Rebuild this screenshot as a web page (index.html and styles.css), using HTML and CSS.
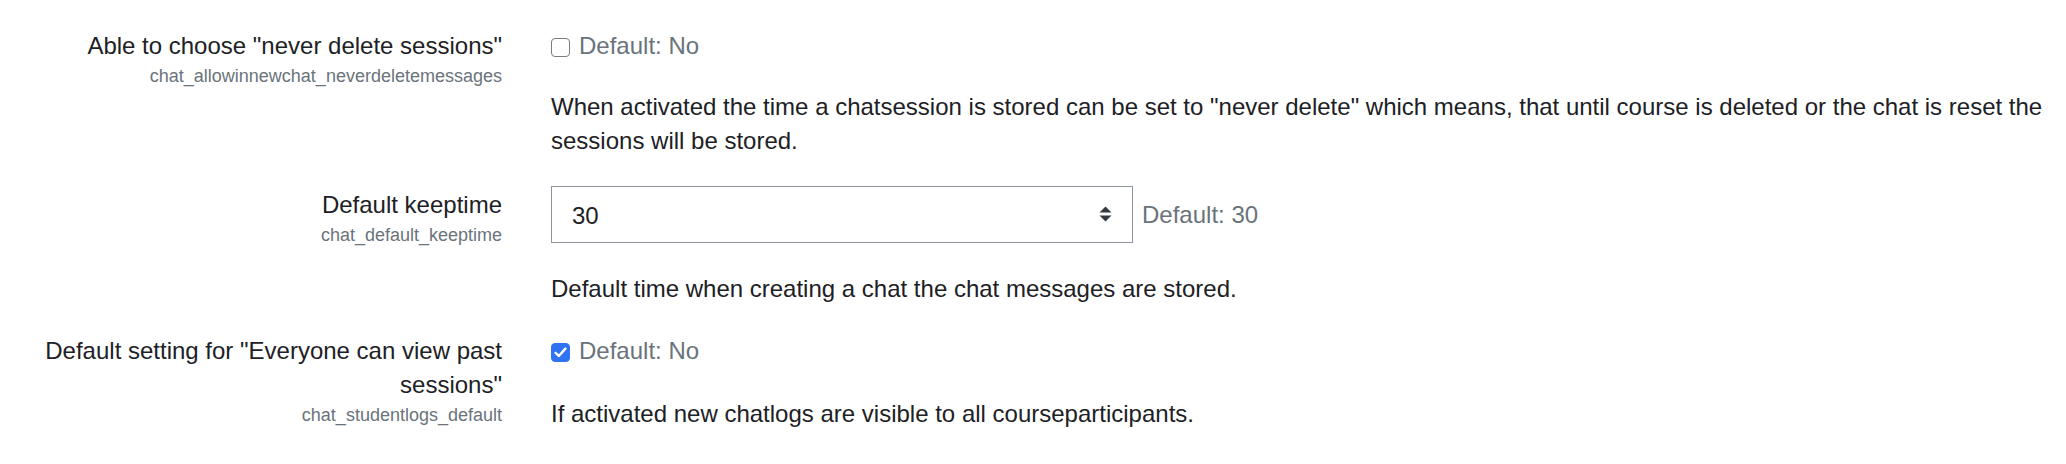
FILE: index.html
```html
<!DOCTYPE html>
<html lang="en">
<head>
<meta charset="utf-8">
<title>Chat settings</title>
<link rel="stylesheet" href="styles.css">
</head>
<body>
<div class="settings">
  <div class="form-item">
    <div class="form-label">
      <label class="label-text">Able to choose "never delete sessions"</label>
      <span class="shortname">chat_allowinnewchat_neverdeletemessages</span>
    </div>
    <div class="form-setting">
      <div class="check-line">
        <span class="checkbox"></span>
        <span class="default-info">Default: No</span>
      </div>
      <div class="description description-first">When activated the time a chatsession is stored can be set to "never delete" which means, that until course is deleted or the chat is reset the sessions will be stored.</div>
    </div>
  </div>

  <div class="form-item">
    <div class="form-label form-label-select">
      <label class="label-text">Default keeptime</label>
      <span class="shortname">chat_default_keeptime</span>
    </div>
    <div class="form-setting">
      <div class="select-line">
        <div class="custom-select">
          <span class="select-value">30</span>
          <svg class="select-arrow" width="13" height="16" viewBox="0 0 13 16" aria-hidden="true">
            <path d="M6.5 0.5 L12.5 6.5 L0.5 6.5 Z" fill="#343a40"/>
            <path d="M0.5 9.5 L12.5 9.5 L6.5 15.5 Z" fill="#343a40"/>
          </svg>
        </div>
        <span class="default-info">Default: 30</span>
      </div>
      <div class="description">Default time when creating a chat the chat messages are stored.</div>
    </div>
  </div>

  <div class="form-item">
    <div class="form-label">
      <label class="label-text">Default setting for "Everyone can view past sessions"</label>
      <span class="shortname">chat_studentlogs_default</span>
    </div>
    <div class="form-setting">
      <div class="check-line">
        <span class="checkbox checked">
          <svg width="13" height="11" viewBox="0 0 13 11" aria-hidden="true">
            <path d="M1.6 5.8 L4.9 9 L11.4 1.6" fill="none" stroke="#ffffff" stroke-width="2.4" stroke-linecap="round" stroke-linejoin="round"/>
          </svg>
        </span>
        <span class="default-info">Default: No</span>
      </div>
      <div class="description">If activated new chatlogs are visible to all courseparticipants.</div>
    </div>
  </div>
</div>
</body>
</html>
```

FILE: styles.css
```css
html, body {
  margin: 0;
  padding: 0;
  background: #ffffff;
}

body {
  font-family: "Liberation Sans", Arial, Helvetica, sans-serif;
  font-size: 24px;
  line-height: 34px;
  color: #1d2125;
}

.settings {
  padding: 29px 22px 0 0;
}

.form-item {
  display: grid;
  grid-template-columns: 502px 1fr;
  column-gap: 49px;
  margin-bottom: 28px;
}

.form-label {
  display: flex;
  flex-direction: column;
  align-items: flex-end;
  text-align: right;
  padding-left: 22px;
}

.form-label-select {
  padding-top: 2px;
}

.label-text {
  display: block;
}

.shortname {
  display: block;
  font-size: 18px;
  line-height: 27px;
  color: #6a737b;
}

.form-setting {
  display: flex;
  flex-direction: column;
  min-width: 0;
}

.check-line {
  display: flex;
  align-items: center;
  height: 34px;
}

.checkbox {
  box-sizing: border-box;
  width: 19px;
  height: 19px;
  margin-top: 2px;
  margin-right: 9px;
  border: 1px solid #7c7c7c;
  border-radius: 4px;
  background: #ffffff;
  display: flex;
  align-items: center;
  justify-content: center;
  flex: none;
}

.checkbox.checked {
  background: #2f72f2;
  border-color: #2f72f2;
}

.default-info {
  color: #6a737b;
}

.select-line {
  display: flex;
  align-items: center;
}

.custom-select {
  box-sizing: border-box;
  width: 582px;
  height: 57px;
  border: 1px solid #8f959e;
  border-radius: 0;
  display: flex;
  align-items: center;
  justify-content: space-between;
  padding: 3px 20px 0 20px;
  margin-right: 9px;
  color: #1d2125;
  background: #ffffff;
}

.select-arrow {
  display: block;
  margin-top: -4px;
}

.description {
  margin-top: 29px;
}

.description-first {
  margin-top: 27px;
}
```
